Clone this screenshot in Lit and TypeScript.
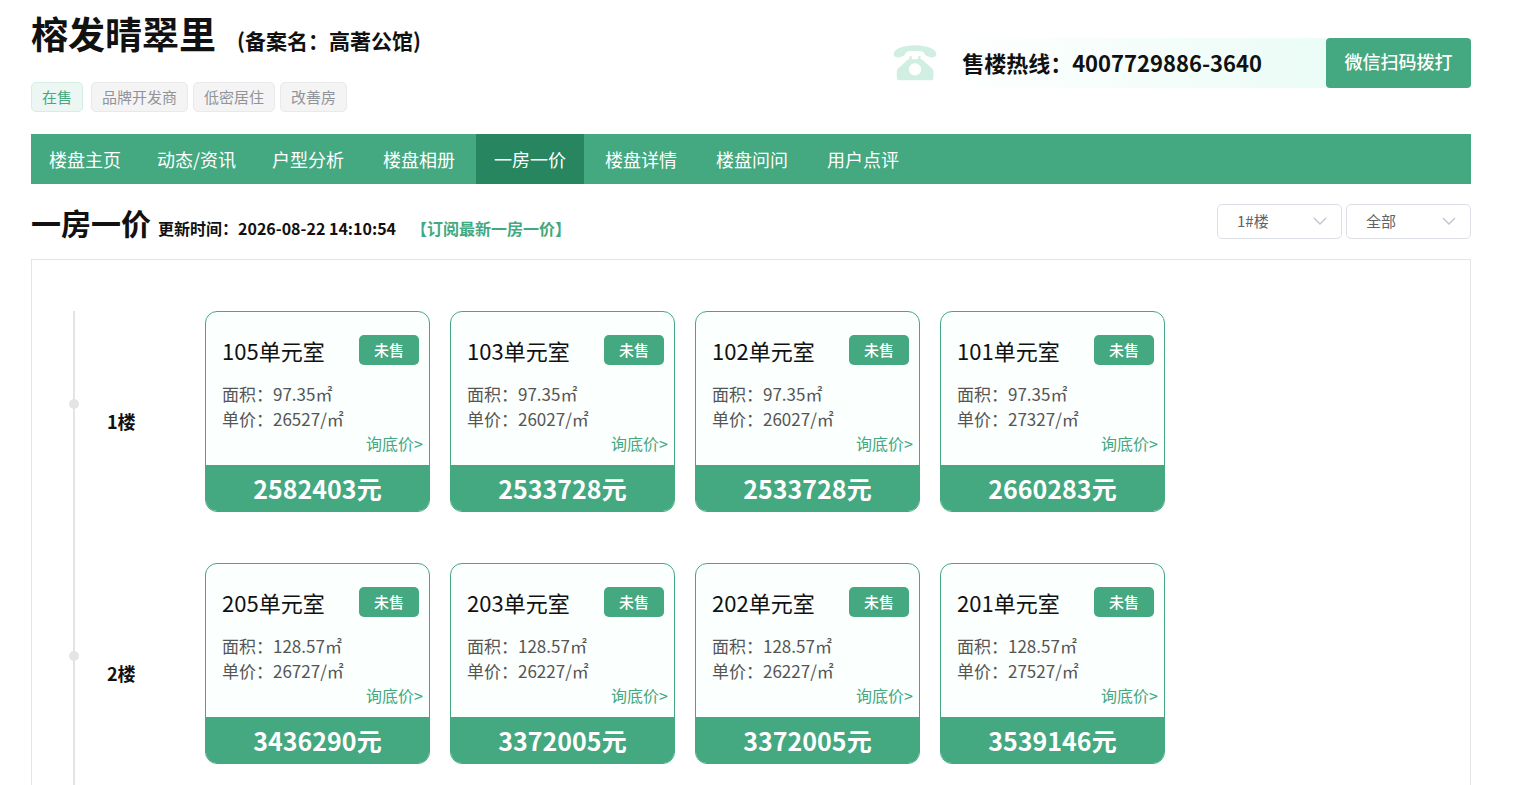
import { LitElement, html, css } from "lit";
import { customElement, property } from "lit/decorators.js";
import { classMap } from "lit/directives/class-map.js";

interface Unit {
  name: string;
  area: string;
  unitPrice: string;
  total: string;
}

interface Floor {
  label: string;
  units: Unit[];
}

const NAV = ["楼盘主页", "动态/资讯", "户型分析", "楼盘相册", "一房一价", "楼盘详情", "楼盘问问", "用户点评"];
const ACTIVE_NAV = "一房一价";
const TAGS = ["品牌开发商", "低密居住", "改善房"];

const FLOORS: Floor[] = [
  {
    label: "1楼",
    units: [
      { name: "105单元室", area: "97.35", unitPrice: "26527", total: "2582403" },
      { name: "103单元室", area: "97.35", unitPrice: "26027", total: "2533728" },
      { name: "102单元室", area: "97.35", unitPrice: "26027", total: "2533728" },
      { name: "101单元室", area: "97.35", unitPrice: "27327", total: "2660283" },
    ],
  },
  {
    label: "2楼",
    units: [
      { name: "205单元室", area: "128.57", unitPrice: "26727", total: "3436290" },
      { name: "203单元室", area: "128.57", unitPrice: "26227", total: "3372005" },
      { name: "202单元室", area: "128.57", unitPrice: "26227", total: "3372005" },
      { name: "201单元室", area: "128.57", unitPrice: "27527", total: "3539146" },
    ],
  },
];

@customElement("unit-card")
export class UnitCard extends LitElement {
  @property({ attribute: false }) unit!: Unit;

  static styles = css`
    :host {
      display: block;
      box-sizing: border-box;
      width: 225px;
      border: 1px solid #44a880;
      border-radius: 12px;
      background: #fbfffe;
      overflow: hidden;
    }
    .head {
      display: flex;
      align-items: center;
      justify-content: space-between;
      height: 30px;
      margin-top: 23px;
      padding: 0 10px 0 16px;
    }
    .name {
      margin: 0;
      font-size: 22px;
      font-weight: 400;
      line-height: 30px;
      color: #111;
    }
    .status {
      width: 60px;
      border-radius: 5px;
      background: #44a880;
      color: #fff;
      font-size: 15px;
      font-weight: 500;
      line-height: 30px;
      text-align: center;
    }
    .info {
      margin: 16px 0 0;
      padding-left: 16px;
      font-size: 17px;
      line-height: 25px;
      color: #555;
    }
    .info p {
      margin: 0;
    }
    .ask {
      display: block;
      padding: 0 6px 10px 0;
      font-size: 16px;
      line-height: 24px;
      text-align: right;
      text-decoration: none;
      color: #44a880;
    }
    .total {
      background: #44a880;
      color: #fff;
      font-size: 25px;
      font-weight: 700;
      line-height: 46px;
      text-align: center;
    }
  `;

  render() {
    const u = this.unit;
    return html`
      <div class="head">
        <h3 class="name">${u.name}</h3>
        <span class="status">未售</span>
      </div>
      <div class="info">
        <p>面积：${u.area}㎡</p>
        <p>单价：${u.unitPrice}/㎡</p>
      </div>
      <a class="ask" href="#">询底价&gt;</a>
      <div class="total">${u.total}元</div>
    `;
  }
}

@customElement("app-root")
export class AppRoot extends LitElement {
  static styles = css`
    :host {
      display: flex;
      flex-direction: column;
      box-sizing: border-box;
      min-height: 100vh;
      padding: 0 49px 0 31px;
      background: #fff;
      color: #111;
      font-family: "Noto Sans CJK SC", sans-serif;
    }
    .header {
      display: flex;
      justify-content: space-between;
      align-items: flex-start;
    }
    .title {
      display: flex;
      align-items: baseline;
      gap: 21px;
      margin: 0;
      font-size: 37px;
      font-weight: 700;
      line-height: 66px;
    }
    .alias {
      font-size: 21px;
      line-height: 30px;
    }
    .tags {
      display: flex;
      gap: 5px;
      margin-top: 16px;
    }
    .tag {
      padding: 0 10px;
      border: 1px solid #e9e9eb;
      border-radius: 5px;
      background: #f4f4f5;
      color: #909399;
      font-size: 15px;
      line-height: 28px;
    }
    .tag.sale {
      margin-right: 3px;
      border-color: #d5ede3;
      background: #ecf6f2;
      color: #44a880;
    }
    .hotline {
      display: flex;
      align-items: center;
      height: 50px;
      margin-top: 38px;
    }
    .phone {
      width: 44px;
      height: 36px;
      margin-right: 5px;
    }
    .number {
      padding: 0 64px 2px 20px;
      background: linear-gradient(90deg, #fff, #ebfcf6);
      font-size: 22px;
      font-weight: 700;
      line-height: 48px;
    }
    .scan {
      min-width: 145px;
      height: 50px;
      padding: 0 18px 4px;
      border: 0;
      border-radius: 4px;
      background: #44a880;
      color: #fff;
      font: 500 18px "Noto Sans CJK SC", sans-serif;
    }
    .nav {
      display: flex;
      margin-top: 22px;
      background: #44a880;
    }
    .nav a {
      padding: 0 18px;
      color: #fff;
      font-size: 18px;
      line-height: 50px;
      text-decoration: none;
    }
    .nav a:nth-child(n + 4) {
      margin-left: 3px;
    }
    .nav a.active {
      background: #27865f;
    }
    .bar {
      display: flex;
      align-items: center;
      justify-content: space-between;
      margin: 20px 0;
    }
    .heading {
      display: flex;
      align-items: baseline;
      gap: 7px;
      height: 35px;
      font-size: 16px;
      font-weight: 700;
      line-height: 37px;
    }
    .heading h2 {
      margin: 0;
      font-size: 30px;
      font-weight: 700;
    }
    .heading a {
      margin-left: 8px;
      color: #44a880;
      text-decoration: none;
    }
    .filters {
      display: flex;
      gap: 4px;
    }
    .filter {
      display: grid;
      grid-template-columns: 1fr 34px;
      align-items: center;
      width: 125px;
    }
    .filter select {
      grid-area: 1 / 1 / 2 / 3;
      appearance: none;
      height: 35px;
      padding: 0 34px 2px 19px;
      border: 1px solid #dcdfe6;
      border-radius: 5px;
      background: #fff;
      color: #606266;
      font: 15px "Noto Sans CJK SC", sans-serif;
    }
    .filter svg {
      grid-area: 1 / 2;
      width: 14px;
      height: 8px;
      margin: 0 0 2px 5px;
      pointer-events: none;
      z-index: 1;
    }
    .panel {
      display: flex;
      flex: 1;
      flex-direction: column;
      padding: 51px 40px 0 41px;
      border: 1px solid #e4e4e4;
      border-bottom: 0;
    }
    .timeline {
      display: flex;
      flex: 1;
      flex-direction: column;
      gap: 51px;
      border-left: 2px solid #e4e4e4;
    }
    .floor {
      display: grid;
      grid-template-columns: 10px 120px 1fr;
      align-items: center;
      margin-left: -6px;
    }
    .dot {
      width: 10px;
      height: 10px;
      margin-bottom: 15px;
      border-radius: 50%;
      background: #e4e4e4;
    }
    .label {
      margin: 18px 0 0 28px;
      font-size: 18px;
      font-weight: 700;
      line-height: 26px;
    }
    .units {
      display: flex;
      flex-wrap: wrap;
      gap: 20px;
      margin-left: 6px;
    }
  `;

  private renderFilter(name: string, value: string) {
    return html`
      <div class="filter">
        <select aria-label=${name}>
          <option>${value}</option>
        </select>
        <svg viewBox="0 0 14 8" fill="none" stroke="#c0c4cc" stroke-width="1.4" aria-hidden="true">
          <path d="M1 1l6 6 6-6" />
        </svg>
      </div>
    `;
  }

  render() {
    return html`
      <header class="header">
        <div>
          <h1 class="title">榕发晴翠里 <span class="alias">(备案名：高著公馆)</span></h1>
          <div class="tags">
            <span class="tag sale">在售</span>
            ${TAGS.map((t) => html`<span class="tag">${t}</span>`)}
          </div>
        </div>
        <div class="hotline">
          <svg class="phone" viewBox="0 0 44 36" fill="#d1eee2" aria-hidden="true">
            <path
              d="M22 0.2C34 0.2 43.2 4 43.4 9C43.4 12 40.6 12.8 37.4 12.2C33.6 11.6 31.8 10.6 31.5 8.6C31.2 6.6 28 6 22 6S12.8 6.6 12.5 8.6C12.2 10.6 10.4 11.6 6.6 12.2C3.4 12.8 0.6 12 0.6 9C0.8 4 10 0.2 22 0.2Z"
            />
            <path
              fill-rule="evenodd"
              d="M16.4 11.2H18.8V14.2H25.2V11.2H27.6V14.2C29.2 14.6 30 15.2 31 16.2L38.8 23.2C40 24.4 40.4 25.4 40.4 27V32.4C40.4 34.4 39.4 35.2 37.4 35.2H6.8C4.8 35.2 3.8 34.4 3.8 32.4V27C3.8 25.4 4.2 24.4 5.4 23.2L13 16.2C14 15.2 14.8 14.6 16.4 14.2ZM22 18.2A6.2 6.2 0 1 0 22 30.6A6.2 6.2 0 1 0 22 18.2Z"
            />
          </svg>
          <div class="number">售楼热线：4007729886-3640</div>
          <button class="scan" type="button">微信扫码拨打</button>
        </div>
      </header>
      <nav class="nav">
        ${NAV.map((n) => html`<a href="#" class=${classMap({ active: n === ACTIVE_NAV })}>${n}</a>`)}
      </nav>
      <section class="bar">
        <div class="heading">
          <h2>一房一价</h2>
          <span>更新时间：2026-08-22 14:10:54</span>
          <a href="#">【订阅最新一房一价】</a>
        </div>
        <div class="filters">${this.renderFilter("楼栋", "1#楼")} ${this.renderFilter("状态", "全部")}</div>
      </section>
      <main class="panel">
        <div class="timeline">
          ${FLOORS.map(
            (f) => html`
              <section class="floor">
                <span class="dot"></span>
                <div class="label">${f.label}</div>
                <div class="units">${f.units.map((u) => html`<unit-card .unit=${u}></unit-card>`)}</div>
              </section>
            `,
          )}
        </div>
      </main>
    `;
  }
}
